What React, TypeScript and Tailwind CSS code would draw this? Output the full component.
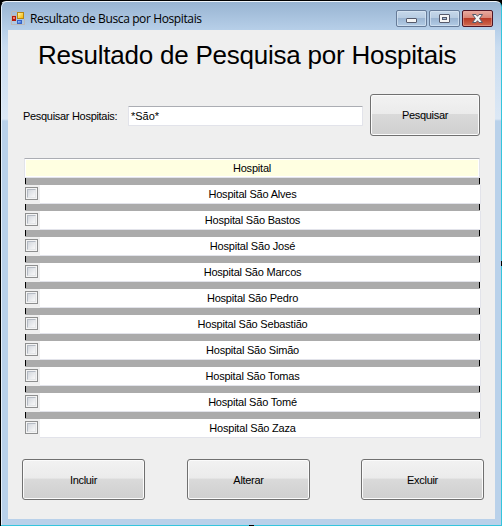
const hospitals = [
  { name: "Hospital São Alves" },
  { name: "Hospital São Bastos" },
  { name: "Hospital São José" },
  { name: "Hospital São Marcos" },
  { name: "Hospital São Pedro" },
  { name: "Hospital São Sebastião" },
  { name: "Hospital São Simão" },
  { name: "Hospital São Tomas" },
  { name: "Hospital São Tomé" },
  { name: "Hospital São Zaza" },
];

function FormIcon() {
  return (
    <svg width="14" height="14" viewBox="0 0 14 14" shapeRendering="crispEdges">
      <defs>
        <linearGradient id="gold" x1="0" y1="0" x2="1" y2="1">
          <stop offset="0" stopColor="#fff3a8" />
          <stop offset="1" stopColor="#f5b800" />
        </linearGradient>
        <linearGradient id="blue" x1="0" y1="0" x2="1" y2="1">
          <stop offset="0" stopColor="#a9cbff" />
          <stop offset="1" stopColor="#3268d8" />
        </linearGradient>
      </defs>
      <path d="M.5 .5H6M.5 .5V13.5H13.5V8M.5 4.5H6" fill="none" stroke="#bdb9b8" />
      <rect x="1" y="5" width="4" height="5" fill="#b31b0c" />
      <rect x="2" y="6" width="2" height="2" fill="#f0806c" />
      <rect x="6" y="1" width="7" height="7" fill="#b88610" />
      <rect x="7" y="2" width="5" height="5" fill="url(#gold)" />
      <rect x="6" y="9" width="5" height="4" fill="#3763c4" />
      <rect x="7" y="10" width="3" height="2" fill="url(#blue)" />
    </svg>
  );
}

function WindowControl({ kind }: { kind: "min" | "max" | "close" }) {
  const tone =
    kind === "close"
      ? "border-[#4e1424] bg-[linear-gradient(#e8aaa0_0%,#d98576_46%,#b93a26_50%,#cf6a50_100%)] shadow-[inset_0_0_0_1px_#eaa99f88]"
      : "border-[#667b98] bg-[linear-gradient(#c6d8ea_0%,#b7cce2_46%,#9bb5d2_50%,#b3cce5_100%)] shadow-[inset_0_0_0_1px_#d9e7f5aa]";
  return (
    <div className={`h-[17px] w-[31px] rounded-[2px] border ${tone}`}>
      <svg width="29" height="15" viewBox="0 0 29 15" fill="#f5f5f5" stroke="#555a6b">
        {kind === "min" && <rect x="9.5" y="7.5" width="10" height="4" rx=".5" />}
        {kind === "max" && (
          <>
            <rect x="9.5" y="3.5" width="10" height="8" rx=".5" />
            <rect x="12.5" y="6.5" width="4" height="2" fill="#a5bdd8" />
          </>
        )}
        {kind === "close" && (
          <path d="M9.5 3.5H13L14.5 5.3L16 3.5H19.5L16.5 7.5L19.5 11.5H16L14.5 9.7L13 11.5H9.5L12.5 7.5Z" />
        )}
      </svg>
    </div>
  );
}

function Button({ label, size }: { label: string; size: string }) {
  return (
    <button
      className={`rounded-[3px] border border-[#707070] bg-[linear-gradient(#f2f2f2_0%,#ebebeb_47%,#dadada_48%,#cfcfcf_100%)] text-center tracking-[-0.3px] shadow-[inset_0_0_0_1px_#fbfbfb] ${size}`}
    >
      {label}
    </button>
  );
}

function Separator() {
  return (
    <div className="flex h-[7px] w-[455px] bg-[#ababab]">
      <div className="h-[6px] w-px bg-black" />
      <div className="ml-auto h-[6px] w-px bg-black" />
    </div>
  );
}

function Check() {
  return (
    <div className="mt-[2px] size-[13px] border border-[#8e8f8f] bg-[#f4f4f4] p-[1px]">
      <div className="size-[9px] border border-[#b4bac3] border-r-[#e4e6e8] border-b-[#e4e6e8] bg-[linear-gradient(135deg,#d3d7dd,#f8f8f8)]" />
    </div>
  );
}

export default function App() {
  return (
    <div className="relative h-[526px] w-[502px] overflow-hidden bg-black font-['Liberation_Sans',Arial,sans-serif] text-[11px] leading-[14px] tracking-[-0.2px] text-black">
      <div className="flex h-[525px] flex-col pt-px">
        <div className="flex h-[524px] w-[502px] flex-col rounded-t-[6px] border-t border-r border-l border-t-[#eef4fa] border-r-[#35c5dd] border-l-black bg-[linear-gradient(#98b4d2_0px,#b9d1ea_30px,#c9dcf0_45px,#dce8f5_117px,#b9d1ea_119px)] pr-[6px] pl-[7px] shadow-[inset_1px_0_0_#e6f0fa]">
          <div className="flex h-[28px] items-start">
            <div className="mt-[9px] ml-[3px]">
              <FormIcon />
            </div>
            <span className="mt-[8px] ml-[5px] font-['Open_Sans','Noto_Sans',sans-serif] text-[12px] leading-[18px] tracking-[-0.38px] whitespace-nowrap">
              Resultato de Busca por Hospitais
            </span>
            <div className="mt-[8px] mr-[2px] ml-auto flex gap-[2px]">
              <WindowControl kind="min" />
              <WindowControl kind="max" />
              <WindowControl kind="close" />
            </div>
          </div>

          <main className="flex h-[489px] w-[487px] flex-col bg-[#efefef]">
            <h1 className="mt-[8px] ml-[30px] h-[34px] text-[26px] leading-[34px] tracking-[-0.23px] whitespace-nowrap">
              Resultado de Pesquisa por Hospitais
            </h1>

            <div className="mt-[22px] ml-[15px] flex h-[42px] items-center">
              <label className="mt-[2px] w-[105px] tracking-[-0.3px] whitespace-nowrap">
                Pesquisar Hospitais:
              </label>
              <div className="mt-px h-[20px] w-[235px] rounded-[1px] border border-[#e2e3ea] border-t-[#abadb3] bg-white pl-[2px] leading-[18px] tracking-normal">
                *São*
              </div>
              <Button label="Pesquisar" size="ml-[7px] h-[42px] w-[110px]" />
            </div>

            <div className="mt-[22px] ml-[16px] w-[457px]">
              <div className="h-[20px] w-[456px] rounded-[1px] border border-[#e2e3ea] border-t-[#abadb3] bg-[#ffffe1] text-center leading-[18px] shadow-[inset_0_0_0_1px_#fff]">
                Hospital
              </div>
              {hospitals.map((h) => (
                <div key={h.name} className="ml-px">
                  <Separator />
                  <div className="flex h-[19px]">
                    <Check />
                    <div className="ml-[2px] flex-1 border-r border-b border-[#e2e3ea] bg-white pr-[15px] text-center leading-[18px] whitespace-nowrap">
                      {h.name}
                    </div>
                  </div>
                </div>
              ))}
            </div>

            <div className="mt-[21px] ml-[14px] flex">
              <Button label="Incluir" size="h-[41px] w-[123px]" />
              <Button label="Alterar" size="ml-[42px] h-[41px] w-[123px]" />
              <Button label="Excluir" size="ml-[51px] h-[41px] w-[123px]" />
            </div>
          </main>
        </div>
      </div>
      <div className="ml-px h-px w-[501px] bg-[#35c5dd]" />
      <div className="absolute bottom-0 left-[249px] h-px w-[5px] bg-black" />
      <div className="absolute top-[261px] right-0 h-[5px] w-px bg-black" />
    </div>
  );
}
